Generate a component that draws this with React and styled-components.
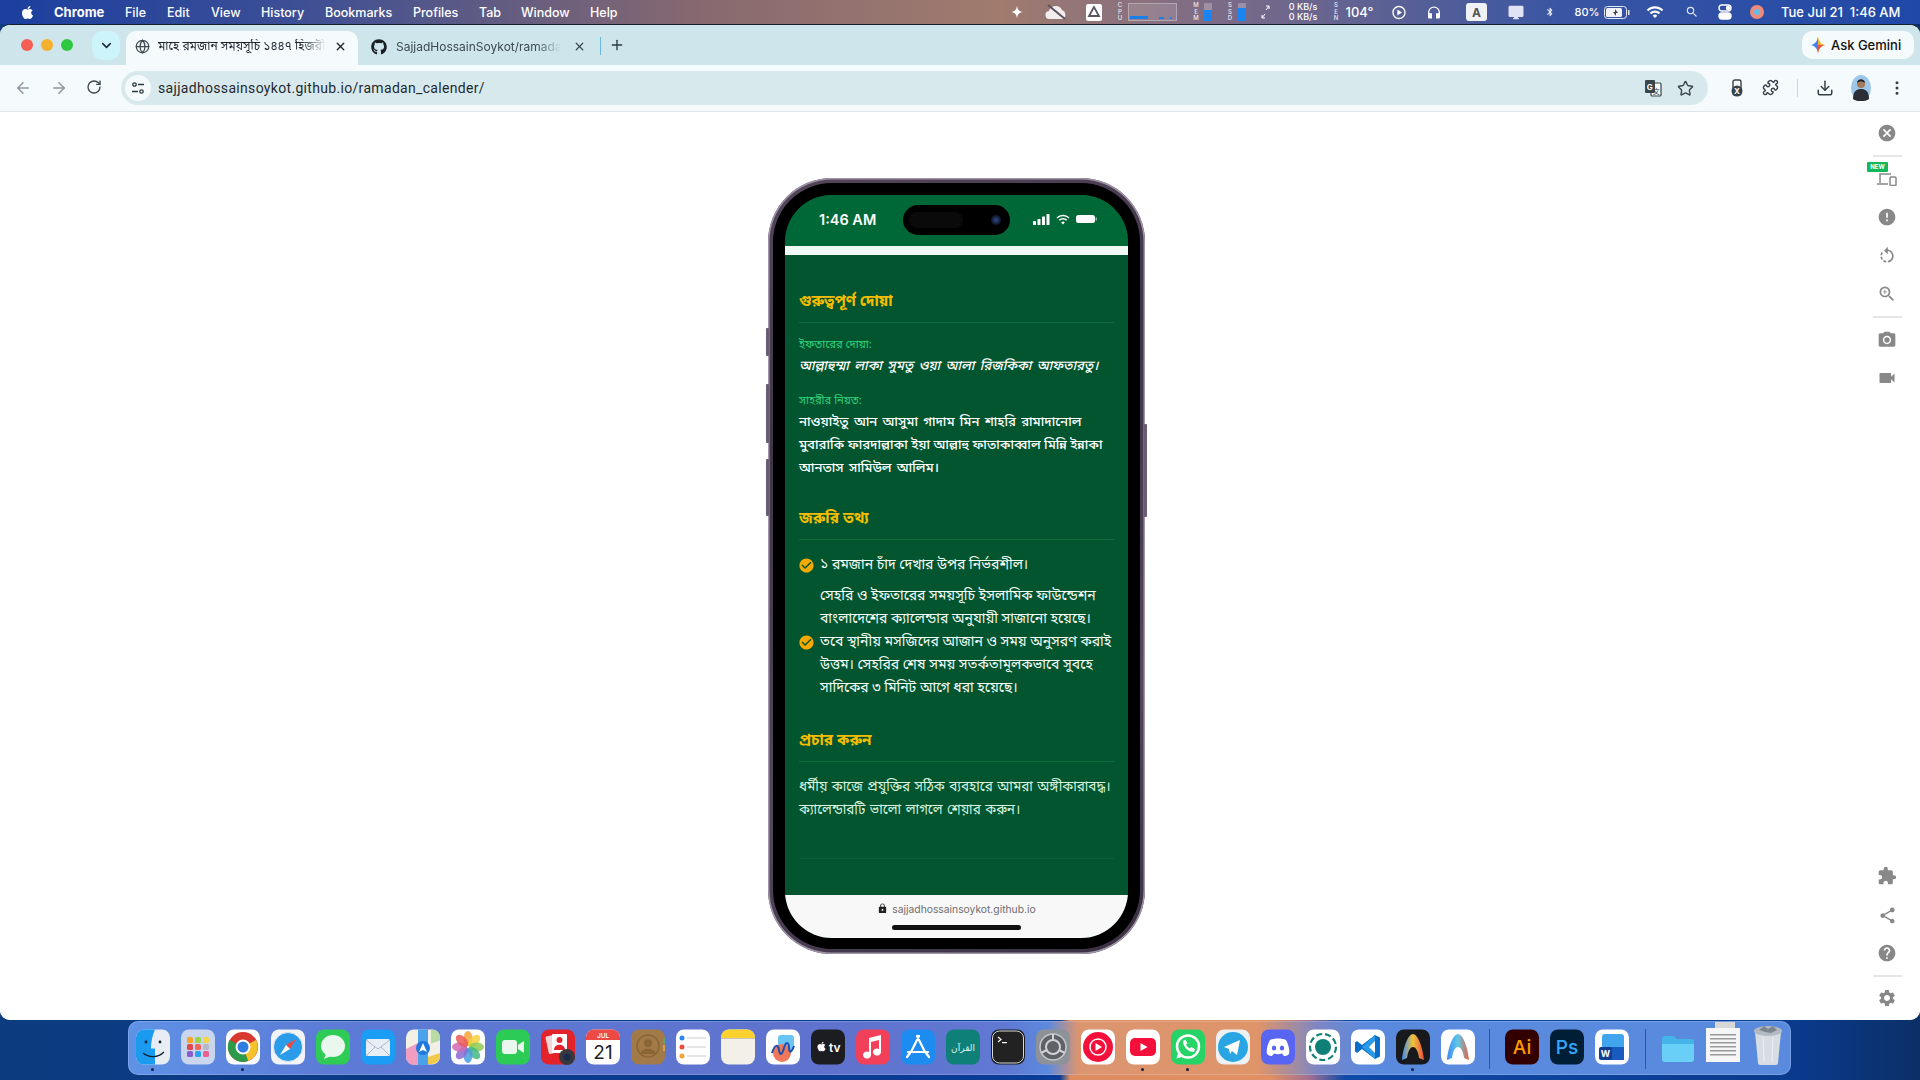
import React from 'react';
import styled, { createGlobalStyle } from 'styled-components';
import { ArrowLeft, ArrowRight, RotateCw, X, Plus, ChevronDown, Star, Download, EllipsisVertical, Globe, Puzzle } from 'lucide-react';
import { FaGithub, FaApple } from 'react-icons/fa';
import { MdCancel, MdError, MdZoomIn, MdCameraAlt, MdVideocam, MdExtension, MdShare, MdHelp, MdSettings, MdRotateLeft, MdCheckCircle, MdLock, MdBluetooth, MdWifi, MdSearch, MdHeadphones, MdOutlinePlayCircle, MdDesktopMac } from 'react-icons/md';

const BENGALI = `"Noto Sans Bengali", "Noto Serif Bengali", "Lohit Bengali", "Hind Siliguri", "Kalpurush", "SolaimanLipi", "Noto Sans", "DejaVu Sans", sans-serif`;
const UI = `Inter, "Liberation Sans", sans-serif`;

const Global = createGlobalStyle`
  html, body { margin: 0; padding: 0; height: 100%; overflow: hidden; }
  * { box-sizing: border-box; }
  body { font-family: ${UI}; }
`;

const Desktop = styled.div`
  width: 1920px;
  height: 1080px;
  display: flex;
  flex-direction: column;
  background: linear-gradient(90deg, #0c3b7f 0, #0a3c98 1060px, #dd8c60 1070px, #e09064 1270px, #a06f92 1310px, #0f4aa8 1345px, #0a3a8c 1800px, #0c2f66 1920px);
`;

const MenuBar = styled.div`
  height: 24px;
  flex: none;
  display: flex;
  align-items: center;
  padding-left: 20px;
  color: #fff;
  font-size: 12.5px;
  font-weight: 500;
  background: linear-gradient(90deg, #1b3f9f 0, #3d4f95 300px, #87696f 700px, #a07b6e 1000px, #7f6c85 1200px, #3a56a3 1560px, #2048a8 1920px);
`;

const MenuLeft = styled.div`
  width: 990px;
  flex: none;
  display: flex;
  align-items: center;
`;

const AppleSlot = styled.span`
  width: 34px;
  flex: none;
  display: flex;
`;

const MenuItem = styled.span`
  width: ${p => p.$w}px;
  flex: none;
  font-weight: ${p => (p.$bold ? 700 : 500)};
  font-size: ${p => (p.$bold ? 13 : 12.5)}px;
  white-space: nowrap;
`;

const StatusArea = styled.div`
  display: flex;
  align-items: center;
  height: 24px;
`;

const Stat = styled.div`
  margin-left: ${p => p.$ml}px;
  flex: none;
  display: flex;
  align-items: center;
  justify-content: ${p => (p.$start ? 'flex-start' : 'center')};
  width: ${p => p.$w}px;
  font-size: ${p => p.$fs || 13}px;
  white-space: nowrap;
`;

const TinyLabel = styled.div`
  margin-left: ${p => p.$ml}px;
  width: 6px;
  font-size: 6px;
  line-height: 6.5px;
  font-weight: 500;
  text-align: center;
  color: #e8e8f0;
  flex: none;
`;

const CpuGraph = styled.div`
  margin-left: 5px;
  width: 49px;
  height: 18px;
  border: 1px solid rgba(255, 255, 255, 0.3);
  background: rgba(255, 255, 255, 0.12);
  display: flex;
  align-items: flex-end;
  gap: 1px;
  padding: 1px;
`;

const CpuTick = styled.i`
  display: block;
  width: ${p => p.$w}px;
  height: ${p => p.$h}px;
  margin-left: ${p => p.$ml || 0}px;
  background: #1a7fe8;
`;

const MeterBar = styled.div`
  margin-left: 5px;
  width: 8px;
  height: 18px;
  border-radius: 1px;
  background: rgba(255, 255, 255, 0.25);
  display: flex;
  align-items: flex-end;
`;

const MeterFill = styled.i`
  display: block;
  width: 100%;
  height: ${p => p.$h}px;
  background: #1a84f0;
`;

const NetText = styled.div`
  font-size: 9px;
  line-height: 10px;
  font-weight: 500;
  text-align: right;
`;

const Window = styled.div`
  flex: none;
  height: 996px;
  border-radius: 10px;
  overflow: hidden;
  display: flex;
  flex-direction: column;
  background: #fff;
  border-top: 1px solid #14202c;
`;

const TabStrip = styled.div`
  height: 40px;
  flex: none;
  background: #cde5eb;
  display: flex;
  align-items: flex-end;
  padding-left: 21px;
  position: relative;
`;

const Light = styled.span`
  width: 12px;
  height: 12px;
  border-radius: 50%;
  background: ${p => p.$c};
  margin: 0 8px 14px 0;
  flex: none;
`;

const TabMenu = styled.div`
  width: 28px;
  height: 29px;
  margin: 0 6px 5px 11px;
  border-radius: 10px;
  background: #cdf3fb;
  display: flex;
  align-items: center;
  justify-content: center;
  color: #1d2a33;
`;

const Tab = styled.div`
  width: ${p => p.$w}px;
  height: 34px;
  flex: none;
  display: flex;
  align-items: center;
  padding-left: ${p => p.$pl}px;
  padding-bottom: 3px;
  border-radius: 10px 10px 0 0;
  background: ${p => (p.$active ? '#f5fafc' : 'transparent')};
  color: ${p => (p.$active ? '#1c2730' : '#3b4a52')};
  font-size: 12px;
`;

const TabTitle = styled.span`
  width: ${p => p.$w}px;
  margin: 0 ${p => p.$mr}px 0 ${p => p.$ml}px;
  overflow: hidden;
  white-space: nowrap;
  font-family: ${p => (p.$bn ? BENGALI : UI)};
  -webkit-mask-image: linear-gradient(90deg, #000 85%, transparent);
  mask-image: linear-gradient(90deg, #000 85%, transparent);
`;

const TabSep = styled.span`
  width: 1px;
  height: 18px;
  margin: 0 0 10px 11px;
  background: #6cb8d8;
`;

const PlusWrap = styled.span`
  margin: 0 0 10px 8px;
  height: 18px;
  color: #2b3a43;
`;

const Gemini = styled.div`
  position: absolute;
  right: 6px;
  top: 6px;
  width: 112px;
  height: 28px;
  border-radius: 10px;
  background: #f5fafc;
  display: flex;
  align-items: center;
  gap: 6px;
  padding-left: 9px;
  font-size: 13px;
  font-weight: 500;
  color: #111;
`;

const Toolbar = styled.div`
  height: 47px;
  flex: none;
  background: #f5fafc;
  border-bottom: 1px solid #dfe6ea;
  display: flex;
  align-items: center;
  color: #5c6a72;
`;

const NavIcon = styled.span`
  width: 18px;
  height: 18px;
  margin-left: ${p => p.$ml}px;
  flex: none;
  color: ${p => p.$c || '#8d989e'};
  display: flex;
`;

const Address = styled.div`
  width: 1587px;
  height: 34px;
  margin-left: 17px;
  flex: none;
  border-radius: 17px;
  background: #d8e9ed;
  display: flex;
  align-items: center;
  padding: 0 14px 0 4px;
  color: #1f2a30;
  font-family: Roboto, ${UI};
  font-size: 14px;
  letter-spacing: 0.32px;
`;

const SiteInfo = styled.span`
  width: 26px;
  height: 26px;
  border-radius: 50%;
  background: #f5fafc;
  display: flex;
  align-items: center;
  justify-content: center;
  margin-right: 7px;
`;

const AddressEnd = styled.div`
  margin-left: auto;
  display: flex;
  align-items: center;
  gap: 15px;
  color: #3a464c;
`;

const ToolSep = styled.span`
  width: 1px;
  height: 18px;
  margin-left: 17px;
  background: #a4e6f2;
`;

const Avatar = styled.span`
  width: 22px;
  height: 26px;
  margin-left: 16px;
  flex: none;
  display: flex;
`;

const Content = styled.div`
  flex: 1;
  min-height: 0;
  position: relative;
  display: flex;
  align-items: center;
  justify-content: center;
  padding-right: 7px;
  background: #fff;
`;

const SidePanel = styled.aside`
  position: absolute;
  right: 0;
  top: 0;
  bottom: 0;
  width: 66px;
  display: flex;
  flex-direction: column;
  align-items: center;
  padding: 11px 0 12px 0;
  color: #888;
`;

const PanelIcon = styled.span`
  position: relative;
  width: 20px;
  height: 20px;
  display: flex;
  align-items: center;
  justify-content: center;
  margin-top: ${p => p.$mt || 0}px;
`;

const PanelRule = styled.span`
  width: 29px;
  height: 2px;
  background: #e6e6e6;
  margin-top: ${p => p.$mt}px;
`;

const PanelGap = styled.span`
  flex: 1;
`;

const NewBadge = styled.span`
  position: absolute;
  left: -10px;
  top: -7px;
  width: 21px;
  height: 10px;
  border-radius: 1px;
  background: #12b85a;
  color: #fff;
  font-size: 6px;
  font-weight: 700;
  line-height: 10px;
  text-align: center;
`;

const Phone = styled.div`
  width: 377px;
  height: 776px;
  flex: none;
  position: relative;
  border-radius: 64px;
  padding: 5px;
  background: linear-gradient(160deg, #54475c, #3f3448 30%, #54475c 70%, #3a3042);
  box-shadow: inset 0 0 0 1.5px #a195a8;
`;

const SideKey = styled.span`
  position: absolute;
  top: ${p => p.$top}px;
  ${p => (p.$right ? 'right: -2px;' : 'left: -2px;')}
  width: 3px;
  height: ${p => p.$h}px;
  background: #6a5c72;
  border-radius: 1px;
`;

const Bezel = styled.div`
  width: 100%;
  height: 100%;
  background: #000;
  border-radius: 59px;
  padding: 12px;
`;

const Screen = styled.div`
  position: relative;
  width: 343px;
  height: 743px;
  border-radius: 47px;
  overflow: hidden;
  display: flex;
  flex-direction: column;
  background: #02552f;
`;

const StatusBar = styled.div`
  height: 51px;
  flex: none;
  background: #006837;
  color: #fff;
  display: flex;
  align-items: center;
  padding: 0 31px 3px 34px;
  font-size: 14.5px;
  font-weight: 600;
  font-family: ${UI};
`;

const Island = styled.div`
  position: absolute;
  left: 118px;
  top: 10px;
  width: 107px;
  height: 30px;
  border-radius: 15px;
  background: #000;
`;

const Camera = styled.span`
  position: absolute;
  right: 9px;
  top: 10px;
  width: 10px;
  height: 10px;
  border-radius: 50%;
  background: radial-gradient(circle, #2c4a8f 0, #141a2e 60%);
`;

const SensorArea = styled.span`
  position: absolute;
  left: 6px;
  top: 7px;
  width: 54px;
  height: 16px;
  border-radius: 8px;
  background: #0a0a0a;
`;

const StatusIcons = styled.div`
  margin-left: auto;
  display: flex;
  align-items: center;
  gap: 6px;
`;

const Strip = styled.div`
  height: 9px;
  flex: none;
  background: #f0faf4;
`;

const Page = styled.div`
  flex: 1;
  min-height: 0;
  padding: 33px 14px 0;
  font-family: ${BENGALI};
  color: #fff;
`;

const Heading = styled.h2`
  margin: ${p => p.$mt || 0}px 0 0;
  height: 35px;
  padding-bottom: 6px;
  border-bottom: 1px solid #0f6e3c;
  font-size: 15.3px;
  line-height: 28px;
  font-weight: 700;
  color: #f5bd00;
`;

const Label = styled.div`
  margin-top: ${p => p.$mt}px;
  font-size: 11.2px;
  line-height: 16px;
  color: #34d07c;
`;

const Verse = styled.div`
  margin-top: ${p => p.$mt}px;
  font-size: 13.2px;
  line-height: 23px;
  font-weight: 500;
  font-style: ${p => (p.$italic ? 'italic' : 'normal')};
`;

const VerseLine = styled.span`
  display: block;
  white-space: nowrap;
  word-spacing: ${p => p.$ws}px;
`;

const Notes = styled.ul`
  list-style: none;
  margin: 14px 0 0;
  padding: 0;
`;

const Note = styled.li`
  display: flex;
  align-items: flex-start;
  gap: 5px;
  margin-bottom: ${p => p.$mb || 0}px;
  padding-left: ${p => p.$indent || 0}px;
  font-size: 14px;
  line-height: 23px;
  color: #f3fbf6;
`;

const CheckMark = styled.span`
  flex: none;
  width: 17px;
  height: 23px;
  display: flex;
  align-items: center;
  color: #f5a800;
  margin-left: -1px;
`;

const ShareText = styled.p`
  margin: 15px 0 0;
  font-size: 13.5px;
  line-height: 23px;
  word-spacing: 1px;
  color: #d3f2de;
`;

const FootRule = styled.div`
  margin-top: 35px;
  border-top: 1px solid #0b6136;
`;

const UrlBar = styled.div`
  height: 43px;
  flex: none;
  position: relative;
  background: #f8f8f8;
  display: flex;
  justify-content: center;
  align-items: flex-start;
  padding-top: 7px;
  gap: 4px;
  font-family: ${UI};
  font-size: 10.3px;
  line-height: 14px;
  color: #6d6d70;
`;

const LockSlot = styled.span`
  display: flex;
  margin-top: 1px;
  color: #222;
`;

const HomeBar = styled.span`
  position: absolute;
  left: 107px;
  bottom: 8px;
  width: 129px;
  height: 5px;
  border-radius: 3px;
  background: #111;
`;

const Dock = styled.div`
  width: 1663px;
  height: 54px;
  margin: 1px 0 0 128px;
  flex: none;
  border-radius: 10px;
  display: flex;
  align-items: flex-start;
  padding: 8px 0 0 7px;
  background: linear-gradient(90deg, #5f92e6 0, #5c7bd6 200px, #5f72cd 700px, #6079d3 880px, #5c8ade 920px, #db9570 950px, #df9469 1130px, #7c86c4 1190px, #5a8ade 1240px, #5a8ade 1663px);
  box-shadow: inset 0 0 0 1px rgba(255, 255, 255, 0.18);
`;

const DockSlot = styled.div`
  position: relative;
  width: 36px;
  height: 36px;
  margin-right: ${p => p.$mr ?? 9}px;
  flex: none;
  svg { display: block; margin-top: ${p => p.$lift || 0}px; }
`;

const RunDot = styled.span`
  position: absolute;
  left: 16px;
  top: 39px;
  width: 3px;
  height: 3px;
  border-radius: 50%;
  background: #102040;
`;

const DockRule = styled.span`
  width: 1px;
  height: 40px;
  margin: 0 14px 0 ${p => p.$ml}px;
  flex: none;
  background: rgba(20, 40, 90, 0.55);
`;

const Tile = ({ bg = '#fff', children }) => (
  <svg width="36" height="36" viewBox="0 0 36 36">
    <rect x="1" y="0.5" width="34" height="35" rx="8" fill={bg} />
    {children}
  </svg>
);

const ICONS = [
  { dot: true, art: <Tile bg="#e7edf3"><path d="M9 0.5h11c-3 7-4 13-4 19h4v16H9a8 8 0 0 1-8-8V8.5a8 8 0 0 1 8-8z" fill="#1a9bf0" /><circle cx="11" cy="13" r="1.4" fill="#123" /><circle cx="25" cy="13" r="1.4" fill="#123" /><path d="M8 24c6 5 15 5 21-1" fill="none" stroke="#123" strokeWidth="1.2" /></Tile> },
  { art: <Tile bg="#c9d6ee">{[8, 15, 22].flatMap((y, r) => [7, 15, 23].map((x, c) => <rect key={`${r}${c}`} x={x} y={y} width="6" height="6" rx="1.5" fill={['#f5a623', '#9dd34a', '#f7d348', '#e2484d', '#f0675c', '#b7b7c5', '#8d5bd0', '#2ea3f2', '#ec5f90'][r * 3 + c]} />))}</Tile> },
  { dot: true, art: <Tile><circle cx="18" cy="18" r="15" fill="#d93a2f" /><path d="M18 18 31 11A15 15 0 0 1 23 32z" fill="#f6c22c" /><path d="M18 18 23 32A15 15 0 0 1 4.500 11z" fill="#2d9a4a" /><circle cx="18" cy="18" r="7.500" fill="#fff" /><circle cx="18" cy="18" r="5.500" fill="#2f7de1" /></Tile> },
  { art: <Tile bg="#f2f4f7"><circle cx="18" cy="18" r="14.500" fill="#2b9cea" /><circle cx="18" cy="18" r="14.500" fill="none" stroke="#dfe6ee" strokeWidth="1" /><path d="m26 10-10 6 4 4z" fill="#f04a3e" /><path d="m10 26 6-10 4 4z" fill="#fff" /></Tile> },
  { art: <Tile bg="#2ecb55"><ellipse cx="18" cy="17" rx="12" ry="11" fill="#e9f7ec" /><path d="M11 25l-2 5 7-3z" fill="#e9f7ec" /></Tile> },
  { art: <Tile bg="#1b9cf5"><rect x="6" y="10" width="24" height="17" rx="2" fill="#e9eef5" /><path d="m6 11 12 9 12-9M6 27l9-9m15 9-9-9" fill="none" stroke="#a9b7c9" strokeWidth="1" /></Tile> },
  { art: <Tile bg="#f3f0e6"><path d="M13 0.500h10V36H13z" fill="#4aa3ea" /><path d="M1 20 13 14v22H9a8 8 0 0 1-8-8z" fill="#ef9dc0" /><path d="M23 28l12-4v3a8 8 0 0 1-8 8h-4z" fill="#f1c94b" /><path d="M26 0.500h1a8 8 0 0 1 8 8v3l-9 3z" fill="#b9dba4" /><circle cx="18" cy="19" r="7" fill="#1f78e0" /><path d="m18 14 4 9-4-2-4 2z" fill="#fff" /></Tile> },
  { art: <Tile>{['#f5a33a', '#f6cf3d', '#8ecb52', '#45b782', '#4a9ee0', '#8a6cd0', '#d567b0', '#ea5b58'].map((c, i) => <ellipse key={c} cx="18" cy="9.500" rx="4.500" ry="7.500" fill={c} opacity="0.85" transform={`rotate(${i * 45} 18 18)`} />)}</Tile> },
  { art: <Tile bg="#2bcb55"><rect x="7" y="11" width="15" height="14" rx="3" fill="#e8f8ec" /><path d="m23 16 6-4v12l-6-4z" fill="#e8f8ec" /></Tile> },
  { art: <Tile bg="#e3222a"><rect x="7" y="6" width="14" height="18" rx="1" fill="#f5d6d6" transform="rotate(-12 14 15)" /><rect x="12" y="5" width="15" height="19" rx="1" fill="#fff" /><circle cx="19.500" cy="11" r="3" fill="#e3222a" /><path d="M14 21c0-7 11-7 11 0z" fill="#e3222a" /><circle cx="27" cy="28" r="8" fill="#38393f" /><circle cx="27" cy="28" r="3.500" fill="#1a2a4a" /></Tile> },
  { art: <Tile><path d="M9 0.500h18a8 8 0 0 1 8 8V11H1V8.500a8 8 0 0 1 8-8z" fill="#ee4a45" /><text x="18" y="8.500" textAnchor="middle" fontSize="6.500" fontFamily="Inter" fontWeight="600" fill="#fff">JUL</text><text x="18" y="30" textAnchor="middle" fontSize="19" fontFamily="Inter" fill="#222">21</text></Tile> },
  { art: <Tile bg="#a27a48"><circle cx="18" cy="17" r="11" fill="none" stroke="#8a6536" strokeWidth="1.500" /><circle cx="18" cy="14" r="4" fill="#8a6536" /><path d="M10 25c2-7 14-7 16 0z" fill="#8a6536" /><rect x="33" y="9" width="2" height="6" fill="#5aa86a" /><rect x="33" y="16" width="2" height="6" fill="#d9a23c" /></Tile> },
  { art: <Tile><circle cx="7" cy="9" r="2.500" fill="#2f86ee" /><circle cx="7" cy="18" r="2.500" fill="#ee4a3e" /><circle cx="7" cy="27" r="2.500" fill="#f2a33a" />{[9, 18, 27].map(y => <rect key={y} x="12" y={y - 0.500} width="19" height="1" fill="#ccc" />)}</Tile> },
  { art: <Tile bg="#f3f0e8"><path d="M9 0.500h18a8 8 0 0 1 8 8V9H1v-.5a8 8 0 0 1 8-8z" fill="#fbd12f" /><rect x="1" y="9" width="34" height="1" fill="#c8c4bb" /></Tile> },
  { art: <Tile><rect x="13" y="6" width="16" height="15" rx="3" fill="#6ac5f2" /><circle cx="17" cy="24" r="9" fill="#f0785a" /><path d="M7 24c3-9 6-9 7-3s3 5 5-2 5-6 5 0 3 4 5-2" fill="none" stroke="#1c4fb0" strokeWidth="2" /></Tile> },
  { art: <Tile bg="#1b1d20"><FaApple x="6" y="12" size="11" color="#fff" /><text x="19" y="23" fontSize="12" fontFamily="Inter" fontWeight="600" fill="#fff">tv</text></Tile> },
  { art: <Tile bg="#f3405a"><path d="M14 9 26 6v17a4 3.500 0 1 1-2-3V11l-8 2v13a4 3.500 0 1 1-2-3z" fill="#fff" /></Tile> },
  { art: <Tile bg="#1c8cf0"><path d="M19 7 11 23M17 7l8 16M8 23h20M7 28l3-4M29 28l-3-4" stroke="#fff" strokeWidth="2.200" strokeLinecap="round" /></Tile> },
  { art: <Tile bg="#0f8078"><text x="18" y="22" textAnchor="middle" fontSize="9" fontFamily="DejaVu Sans" fill="#dff3ee">القرآن</text></Tile> },
  { art: <Tile bg="#16181a"><rect x="2.500" y="2" width="31" height="32" rx="7" fill="#222" stroke="#d9d9d9" strokeWidth="1" /><path d="m8 8 3 2.500L8 13" fill="none" stroke="#fff" strokeWidth="1.200" /><rect x="12" y="13" width="5" height="1.200" fill="#fff" /></Tile> },
  { art: <Tile bg="#8d9298"><circle cx="18" cy="18" r="13" fill="#5e6267" stroke="#c4c7ca" strokeWidth="1.500" /><circle cx="18" cy="18" r="7" fill="none" stroke="#d0d2d5" strokeWidth="2" /><path d="M18 5v6M6 24l6-3M30 24l-6-3" stroke="#d0d2d5" strokeWidth="2" /></Tile> },
  { art: <Tile><circle cx="18" cy="18" r="15" fill="#f4103b" /><circle cx="18" cy="18" r="8" fill="none" stroke="#fff" strokeWidth="1.500" /><path d="m15.500 14 6.500 4-6.500 4z" fill="#fff" /></Tile> },
  { dot: true, art: <Tile><rect x="5" y="9" width="26" height="18" rx="5" fill="#f4103b" /><path d="m15.500 14 7 4-7 4z" fill="#fff" /></Tile> },
  { dot: true, art: <Tile bg="#26d366"><circle cx="18" cy="17.500" r="11" fill="none" stroke="#fff" strokeWidth="2.500" /><path d="m8.500 23-2 6.500 7-2z" fill="#fff" /><path d="M13 12c0 6 5 11 11 11l1-3-4-2-1 1.500c-2-1-3-2-4-4l1.500-1-2-4z" fill="#fff" /></Tile> },
  { art: <Tile bg="#eef1f4"><circle cx="18" cy="18" r="15" fill="#29a5e3" /><path d="m9 18 16-7-3 15-5-4-2 3-1-5z" fill="#fff" /></Tile> },
  { art: <Tile bg="#5865f2"><path d="M10 11c5-2 11-2 16 0 2 4 4 9 3 14-2 2-4 2-5 2l-2-2.500c-3 1-5 1-8 0L12 27c-1 0-3 0-5-2-1-5 1-10 3-14z" fill="#fff" /><ellipse cx="14" cy="19" rx="2.200" ry="2.600" fill="#5865f2" /><ellipse cx="22" cy="19" rx="2.200" ry="2.600" fill="#5865f2" /></Tile> },
  { art: <Tile><circle cx="18" cy="18" r="8" fill="#0f8078" /><circle cx="18" cy="18" r="13" fill="none" stroke="#0f8078" strokeWidth="2.200" strokeDasharray="6 3" /></Tile> },
  { art: <Tile><path d="m25 6 5 2.500v19L25 30 12 20l-5 4-2-1.500v-9L7 12l5 4z" fill="#0a6fc9" /><path d="M25 6v24L12 18z" fill="#2b9be8" /><path d="m25 12-6 6 6 6z" fill="#fff" /></Tile> },
  { dot: true, art: <Tile bg="#17191c"><defs><linearGradient id="arcA" x1="0" y1="0" x2="1" y2="0"><stop offset="0" stopColor="#3d8bf2" /><stop offset="0.5" stopColor="#f2c23a" /><stop offset="1" stopColor="#e8503f" /></linearGradient></defs><path d="M18 5c-5 0-10 14-11 26l5-2c1-7 3-11 6-11s5 4 6 11l5 2C28 19 23 5 18 5z" fill="url(#arcA)" /></Tile> },
  { art: <Tile><defs><linearGradient id="arcB" x1="0" y1="0" x2="1" y2="0"><stop offset="0" stopColor="#3d8bf2" /><stop offset="0.5" stopColor="#5fc8e8" /><stop offset="1" stopColor="#e8603f" /></linearGradient></defs><path d="M18 5c-5 0-10 14-11 26l5-2c1-7 3-11 6-11s5 4 6 11l5 2C28 19 23 5 18 5z" fill="url(#arcB)" /></Tile>, gap: 8 },
];

const EXTRA = [
  <Tile key="ai" bg="#320000"><text x="18" y="25" textAnchor="middle" fontSize="19" fontFamily="Inter" fontWeight="500" fill="#ff9a00">Ai</text></Tile>,
  <Tile key="ps" bg="#001e36"><text x="18" y="25" textAnchor="middle" fontSize="19" fontFamily="Inter" fontWeight="500" fill="#31a8ff">Ps</text></Tile>,
  <Tile key="word"><rect x="8" y="5" width="22" height="26" rx="3" fill="#41a5ee" /><rect x="8" y="18" width="22" height="13" fill="#185abd" /><rect x="5" y="18" width="13" height="13" rx="2" fill="#103f91" /><text x="11.500" y="28" textAnchor="middle" fontSize="9" fontFamily="Inter" fontWeight="700" fill="#fff">W</text></Tile>,
];

const FolderArt = () => (
  <svg width="36" height="36" viewBox="0 0 36 36">
    <path d="M2 10a3 3 0 0 1 3-3h9l3 3h14a3 3 0 0 1 3 3v17a3 3 0 0 1-3 3H5a3 3 0 0 1-3-3z" fill="#45b4e8" />
    <path d="M2 15h32v15a3 3 0 0 1-3 3H5a3 3 0 0 1-3-3z" fill="#69cff7" />
  </svg>
);

const PaperArt = () => (
  <svg width="36" height="42" viewBox="0 0 36 42">
    <rect x="10" y="0" width="20" height="12" fill="#d8d8d8" />
    <rect x="1" y="6" width="34" height="34" fill="#f6f6f6" />
    {[12, 16, 20, 24, 28, 32].map(y => <rect key={y} x="5" y={y} width="26" height="1.500" fill="#9a9a9a" />)}
  </svg>
);

const TrashArt = () => (
  <svg width="36" height="42" viewBox="0 0 36 42">
    <path d="M5 9h26l-3 31a2 2 0 0 1-2 2H10a2 2 0 0 1-2-2z" fill="#d7dde3" />
    <ellipse cx="18" cy="8" rx="14" ry="5" fill="#b4bac2" />
    <path d="m9 7 5-4 4 3 5-3 4 4-6 3-6-1z" fill="#7d858f" />
    <path d="M13 14l1 25m9-25-1 25" stroke="#eef1f4" strokeWidth="1" />
  </svg>
);

const Icon = ({ size, children }) => (
  <svg width={size} height={size} viewBox="0 0 24 24" fill="currentColor">{children}</svg>
);

const TranslateIcon = () => (
  <svg width="18" height="18" viewBox="0 0 18 18">
    <rect x="7" y="4" width="10" height="13" rx="1" fill="#f5fafc" stroke="#3a464c" strokeWidth="1.200" />
    <rect x="1" y="1" width="10" height="13" rx="1" fill="#3a464c" />
    <text x="6" y="11" textAnchor="middle" fontSize="8" fontWeight="700" fontFamily="Inter" fill="#fff">G</text>
    <text x="12.500" y="14.500" textAnchor="middle" fontSize="7" fontFamily="Noto Sans CJK SC" fill="#3a464c">文</text>
  </svg>
);

const MENU = [['File', 42], ['Edit', 44], ['View', 50], ['History', 64], ['Bookmarks', 88], ['Profiles', 66], ['Tab', 42], ['Window', 69], ['Help', 40]];

export default function App() {
  return (
    <Desktop>
      <Global />
      <MenuBar>
        <MenuLeft>
          <AppleSlot><FaApple size={15} /></AppleSlot>
          <MenuItem $w={71} $bold>Chrome</MenuItem>
          {MENU.map(([name, w]) => <MenuItem key={name} $w={w}>{name}</MenuItem>)}
        </MenuLeft>
        <StatusArea>
          <Stat $ml={0} $w={14}><Icon size={14}><path d="M12 1c1 7 3 10 10 11-7 1-9 4-10 11-1-7-3-10-10-11 7-1 9-4 10-11z" /></Icon></Stat>
          <Stat $ml={20} $w={24}><svg width="24" height="16" viewBox="0 0 24 16" fill="#f3eeee"><path d="M6 15a4 4 0 0 1-1-8 7 7 0 0 1 13-1 5 5 0 0 1 1 9z" /><path d="m4 1 17 14" stroke="#5d5160" strokeWidth="2" /></svg></Stat>
          <Stat $ml={18} $w={16}><svg width="16" height="17" viewBox="0 0 16 17"><rect width="16" height="17" rx="2" fill="#fff" /><path d="M8 3 3 12h10z" fill="none" stroke="#5a5560" strokeWidth="1.800" /></svg></Stat>
          <TinyLabel $ml={15}>C<br />P<br />U</TinyLabel>
          <CpuGraph>
            <CpuTick $w={18} $h={3} />
            <CpuTick $w={5} $h={2} $ml={10} />
            <CpuTick $w={2} $h={2} $ml={5} />
          </CpuGraph>
          <TinyLabel $ml={16}>M<br />E<br />M</TinyLabel>
          <MeterBar><MeterFill $h={11} /></MeterBar>
          <TinyLabel $ml={15}>S<br />S<br />D</TinyLabel>
          <MeterBar><MeterFill $h={13} /></MeterBar>
          <Stat $ml={15} $w={9}><svg width="9" height="14" viewBox="0 0 9 14" fill="none" stroke="#fff" strokeWidth="1"><path d="M8 1 5 5M8 1v3M8 1H5M1 13l3-4M1 13v-3M1 13h3" /></svg></Stat>
          <Stat $ml={19} $w={28}><NetText>0 KB/s<br />0 KB/s</NetText></Stat>
          <TinyLabel $ml={16}>S<br />E<br />N</TinyLabel>
          <Stat $ml={6} $w={29}>104°</Stat>
          <Stat $ml={17} $w={16}><MdOutlinePlayCircle size={17} /></Stat>
          <Stat $ml={19} $w={16}><MdHeadphones size={17} /></Stat>
          <Stat $ml={24} $w={21}><svg width="21" height="18" viewBox="0 0 21 18"><rect width="21" height="18" rx="3" fill="#f2f2f6" /><text x="10.500" y="13.500" textAnchor="middle" fontSize="12" fontWeight="700" fontFamily="Inter" fill="#555">A</text></svg></Stat>
          <Stat $ml={20} $w={18}><MdDesktopMac size={19} color="#dfe3f3" /></Stat>
          <Stat $ml={20} $w={10}><MdBluetooth size={20} /></Stat>
          <Stat $ml={20} $w={24} $fs={11}>80%</Stat>
          <Stat $ml={5} $w={26}><svg width="26" height="13" viewBox="0 0 26 13"><rect x="0.500" y="0.500" width="22" height="12" rx="3" fill="none" stroke="#e8e8f0" /><rect x="2" y="2" width="16" height="9" rx="1.500" fill="#f2f2f6" /><rect x="24" y="4" width="1.500" height="5" fill="#e8e8f0" /><path d="M11 3v3H9l3 4V7h2z" fill="#444" /></svg></Stat>
          <Stat $ml={16} $w={18}><MdWifi size={20} /></Stat>
          <Stat $ml={21} $w={14}><MdSearch size={20} color="#dfe3f3" /></Stat>
          <Stat $ml={19} $w={14}><svg width="14" height="16" viewBox="0 0 14 16" fill="none" stroke="#fff" strokeWidth="1.400"><rect x="1" y="1" width="12" height="6" rx="3" /><circle cx="10" cy="4" r="1.500" fill="#fff" /><rect x="1" y="9" width="12" height="6" rx="3" fill="#fff" /></svg></Stat>
          <Stat $ml={18} $w={14}><svg width="14" height="16" viewBox="0 0 14 16"><circle cx="7" cy="8" r="7" fill="#f08a7a" /><circle cx="7" cy="8" r="3" fill="#5fc0e8" /></svg></Stat>
          <Stat $ml={17} $w={122} $start>Tue Jul 21&nbsp;&nbsp;1:46 AM</Stat>
        </StatusArea>
      </MenuBar>

      <Window>
        <TabStrip>
          <Light $c="#f45e55" />
          <Light $c="#f5b02e" />
          <Light $c="#2ec840" />
          <TabMenu><ChevronDown size={15} strokeWidth={2.500} /></TabMenu>
          <Tab $active $w={232} $pl={9}>
            <Globe size={15} color="#3f4b52" />
            <TabTitle $bn $w={168} $ml={8} $mr={8}>মাহে রমজান সময়সূচি ১৪৪৭ হিজরী</TabTitle>
            <X size={13} strokeWidth={2.500} />
          </Tab>
          <Tab $w={231} $pl={13}>
            <FaGithub size={16} color="#1a1f24" />
            <TabTitle $w={165} $ml={9} $mr={12}>SajjadHossainSoykot/ramadan_calender</TabTitle>
            <X size={13} strokeWidth={2.200} />
          </Tab>
          <TabSep />
          <PlusWrap><Plus size={16} /></PlusWrap>
          <Gemini>
            <svg width="14" height="18" viewBox="0 0 14 18"><path d="M7 0c.6 5 2 7.500 7 9-5 1.500-6.400 4-7 9V9z" fill="#f0b429" /><path d="M7 0C6.400 5 5 7.500 0 9h7z" fill="#3f82f0" /><path d="M7 18c-.6-5-2-7.500-7-9h7z" fill="#3f82f0" /><path d="M7 18c.6-5 2-7.500 7-9H7z" fill="#e9503f" /></svg>
            Ask Gemini
          </Gemini>
        </TabStrip>

        <Toolbar>
          <NavIcon $ml={14}><ArrowLeft size={18} /></NavIcon>
          <NavIcon $ml={18}><ArrowRight size={18} /></NavIcon>
          <NavIcon $ml={18} $c="#3c484f"><RotateCw size={16} /></NavIcon>
          <Address>
            <SiteInfo>
              <svg width="14" height="14" viewBox="0 0 14 14" fill="none" stroke="#2c383f" strokeWidth="1.300"><circle cx="3.500" cy="3.500" r="1.700" /><path d="M7 3.500h6M1 10.500h6" /><circle cx="10.500" cy="10.500" r="1.700" /></svg>
            </SiteInfo>
            sajjadhossainsoykot.github.io/ramadan_calender/
            <AddressEnd>
              <TranslateIcon />
              <Star size={17} />
            </AddressEnd>
          </Address>
          <NavIcon $ml={20} $c="#36424a">
            <svg width="18" height="18" viewBox="0 0 18 18"><rect x="5" y="1" width="8" height="15" rx="2" fill="none" stroke="#36424a" strokeWidth="1.400" /><circle cx="9" cy="12" r="5.500" fill="#36424a" /><text x="9" y="15" textAnchor="middle" fontSize="8" fontWeight="700" fontFamily="Inter" fill="#fff">X</text></svg>
          </NavIcon>
          <NavIcon $ml={16} $c="#36424a"><Puzzle size={17} /></NavIcon>
          <ToolSep />
          <NavIcon $ml={18} $c="#36424a"><Download size={18} /></NavIcon>
          <Avatar>
            <svg width="22" height="26" viewBox="0 0 22 26">
              <ellipse cx="11" cy="13" rx="10" ry="13" fill="#9cc7e8" />
              <circle cx="11" cy="9" r="4" fill="#a87a5c" />
              <path d="M7 8c0-5 8-5 8 0-2-2-6-2-8 0z" fill="#20242a" />
              <path d="M3 24c0-8 4-10 8-10s8 2 8 10c-4 3-12 3-16 0z" fill="#2b2e35" />
            </svg>
          </Avatar>
          <NavIcon $ml={16} $c="#36424a"><EllipsisVertical size={18} /></NavIcon>
        </Toolbar>

        <Content>
          <Phone>
            <SideKey $top={150} $h={28} />
            <SideKey $top={206} $h={59} />
            <SideKey $top={281} $h={57} />
            <SideKey $right $top={246} $h={93} />
            <Bezel>
              <Screen>
                <StatusBar>
                  1:46 AM
                  <Island>
                    <SensorArea />
                    <Camera />
                  </Island>
                  <StatusIcons>
                    <svg width="17" height="11" viewBox="0 0 17 11" fill="#fff"><rect x="0" y="7" width="3" height="4" rx="0.500" /><rect x="4.500" y="5" width="3" height="6" rx="0.500" /><rect x="9" y="2.500" width="3" height="8.500" rx="0.500" /><rect x="13.500" y="0" width="3" height="11" rx="0.500" /></svg>
                    <svg width="14" height="11" viewBox="0 0 14 11" fill="none" stroke="#fff" strokeWidth="1.600"><path d="M1 4a8.500 8.500 0 0 1 12 0M3.300 6.300a5.200 5.200 0 0 1 7.400 0" /><path d="M7 10.500 5.200 8.500a2.500 2.500 0 0 1 3.600 0z" fill="#fff" stroke="none" /></svg>
                    <svg width="21" height="8" viewBox="0 0 21 8"><rect width="19" height="8" rx="2.500" fill="#fff" /><rect x="19.500" y="2.200" width="1.500" height="3.600" rx="0.700" fill="#7fb89a" /></svg>
                  </StatusIcons>
                </StatusBar>
                <Strip />
                <Page>
                  <Heading>গুরুত্বপূর্ণ দোয়া</Heading>
                  <Label $mt={15}>ইফতারের দোয়া:</Label>
                  <Verse $italic $mt={1}>
                    <VerseLine $ws={2}>আল্লাহুম্মা লাকা সুমতু ওয়া আলা রিজকিকা আফতারতু।</VerseLine>
                  </Verse>
                  <Label $mt={16}>সাহরীর নিয়ত:</Label>
                  <Verse $mt={1}>
                    <VerseLine $ws={1.8}>নাওয়াইতু আন আসুমা গাদাম মিন শাহরি রামাদানোল</VerseLine>
                    <VerseLine $ws={0}>মুবারাকি ফারদাল্লাকা ইয়া আল্লাহু ফাতাকাব্বাল মিন্নি ইন্নাকা</VerseLine>
                    <VerseLine $ws={1.8}>আনতাস সামিউল আলিম।</VerseLine>
                  </Verse>
                  <Heading $mt={25}>জরুরি তথ্য</Heading>
                  <Notes>
                    <Note $mb={8}><CheckMark><MdCheckCircle size={17} /></CheckMark>১ রমজান চাঁদ দেখার উপর নির্ভরশীল।</Note>
                    <Note $indent={21}>সেহরি ও ইফতারের সময়সূচি ইসলামিক ফাউন্ডেশন বাংলাদেশের ক্যালেন্ডার অনুযায়ী সাজানো হয়েছে।</Note>
                    <Note><CheckMark><MdCheckCircle size={17} /></CheckMark><span>তবে স্থানীয় মসজিদের আজান ও সময় অনুসরণ করাই উত্তম। সেহরির শেষ সময় সতর্কতামূলকভাবে সুবহে সাদিকের ৩ মিনিট আগে ধরা হয়েছে।</span></Note>
                  </Notes>
                  <Heading $mt={27}>প্রচার করুন</Heading>
                  <ShareText>ধর্মীয় কাজে প্রযুক্তির সঠিক ব্যবহারে আমরা অঙ্গীকারাবদ্ধ। ক্যালেন্ডারটি ভালো লাগলে শেয়ার করুন।</ShareText>
                  <FootRule />
                </Page>
                <UrlBar>
                  <LockSlot><MdLock size={11} /></LockSlot>
                  sajjadhossainsoykot.github.io
                  <HomeBar />
                </UrlBar>
              </Screen>
            </Bezel>
          </Phone>

          <SidePanel>
            <PanelIcon><MdCancel size={20} /></PanelIcon>
            <PanelRule $mt={12} />
            <PanelIcon $mt={12}>
              <svg width="20" height="14" viewBox="0 0 20 14" fill="none" stroke="#888" strokeWidth="1.500"><path d="M3 11V2h11M0 12h11" /><rect x="13" y="5" width="6" height="8.500" rx="1" /></svg>
              <NewBadge>NEW</NewBadge>
            </PanelIcon>
            <PanelIcon $mt={18}><MdError size={20} /></PanelIcon>
            <PanelIcon $mt={19}><MdRotateLeft size={24} /></PanelIcon>
            <PanelIcon $mt={18}><MdZoomIn size={24} /></PanelIcon>
            <PanelRule $mt={12} />
            <PanelIcon $mt={12}><MdCameraAlt size={20} /></PanelIcon>
            <PanelIcon $mt={18}><MdVideocam size={22} /></PanelIcon>
            <PanelGap />
            <PanelIcon><MdExtension size={20} /></PanelIcon>
            <PanelIcon $mt={19}><MdShare size={19} /></PanelIcon>
            <PanelIcon $mt={18}><MdHelp size={20} /></PanelIcon>
            <PanelRule $mt={12} />
            <PanelIcon $mt={11}><MdSettings size={20} /></PanelIcon>
          </SidePanel>
        </Content>
      </Window>

      <Dock>
        {ICONS.map((it, i) => (
          <DockSlot key={i} $mr={it.gap}>
            {it.art}
            {it.dot && <RunDot />}
          </DockSlot>
        ))}
        <DockRule $ml={5} />
        {EXTRA.map(a => <DockSlot key={a.key}>{a}</DockSlot>)}
        <DockRule $ml={6} />
        <DockSlot><FolderArt /></DockSlot>
        <DockSlot $lift={-7}><PaperArt /></DockSlot>
        <DockSlot $lift={-6} $mr={0}><TrashArt /></DockSlot>
      </Dock>
    </Desktop>
  );
}
